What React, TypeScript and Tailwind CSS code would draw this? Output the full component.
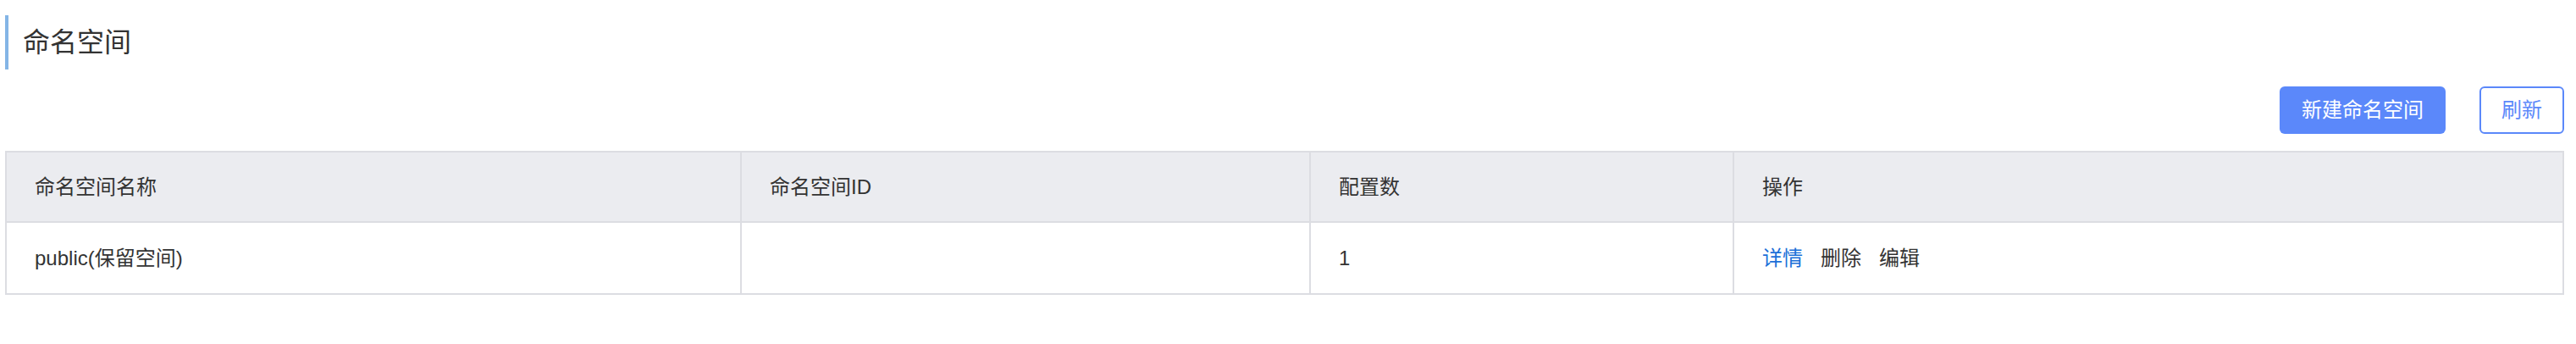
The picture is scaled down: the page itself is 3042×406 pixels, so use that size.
export default function App() {
  const font = { fontFamily: '"Liberation Sans", "Noto Sans CJK SC", sans-serif' };

  return (
    <div className="min-h-[406px] bg-white pl-[6px] pr-[14px] pt-[18px] text-[#333]" style={font}>
      {/* Title */}
      <div className="flex items-center h-[64px]">
        <div className="w-[4px] h-[64px] bg-[#84b5e6]" />
        <h1 className="ml-[17px] text-[32px] leading-[40px] font-normal text-[#333]">命名空间</h1>
      </div>

      {/* Toolbar */}
      <div className="mt-[20px] flex justify-end gap-[40px]">
        <button className="h-[56px] px-[26px] rounded-[6px] bg-[#5b88fa] text-white text-[24px]">
          新建命名空间
        </button>
        <button className="h-[56px] w-[100px] rounded-[6px] border-2 border-[#5b88fa] bg-white text-[#5b88fa] text-[24px]">
          刷新
        </button>
      </div>

      {/* Table */}
      <div className="mt-[20px] border-2 border-[#dcdde2] text-[24px]">
        <div className="flex h-[83px] bg-[#ebecf0] border-b-2 border-[#dcdde2]">
          <div className="w-[868px] flex items-center pl-[33px] border-r-2 border-[#dcdde2]">命名空间名称</div>
          <div className="w-[672px] flex items-center pl-[33px] border-r-2 border-[#dcdde2]">命名空间ID</div>
          <div className="w-[500px] flex items-center pl-[33px] border-r-2 border-[#dcdde2]">配置数</div>
          <div className="flex-1 flex items-center pl-[33px]">操作</div>
        </div>
        <div className="flex h-[83px] bg-white">
          <div className="w-[868px] flex items-center pl-[33px] border-r-2 border-[#dcdde2]">public(保留空间)</div>
          <div className="w-[672px] flex items-center pl-[33px] border-r-2 border-[#dcdde2]" />
          <div className="w-[500px] flex items-center pl-[33px] border-r-2 border-[#dcdde2]">1</div>
          <div className="flex-1 flex items-center pl-[33px] gap-[21px]">
            <a className="text-[#1b6fd8] cursor-pointer">详情</a>
            <a className="text-[#333] cursor-pointer">删除</a>
            <a className="text-[#333] cursor-pointer">编辑</a>
          </div>
        </div>
      </div>
    </div>
  );
}
